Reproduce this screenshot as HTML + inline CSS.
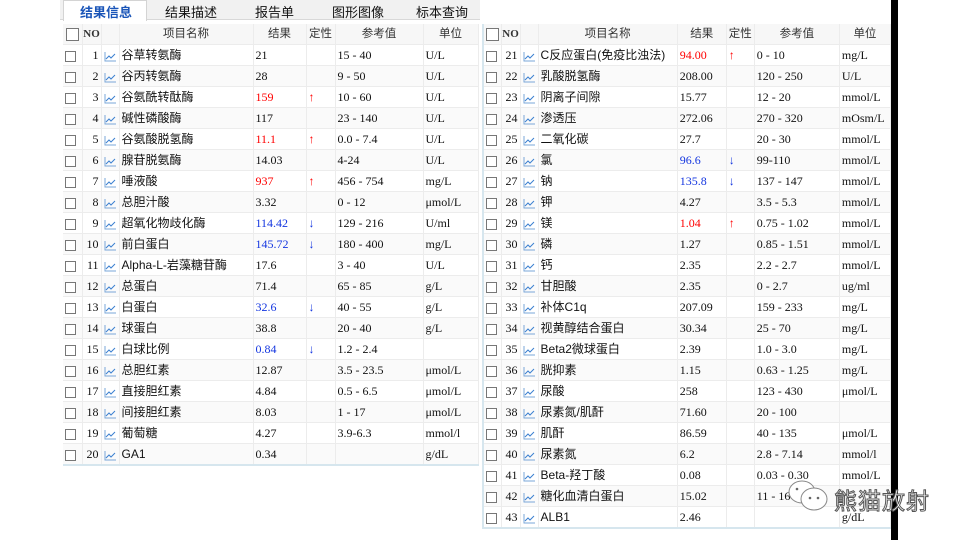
<!DOCTYPE html>
<html><head><meta charset="utf-8"><style>
*{margin:0;padding:0;box-sizing:border-box}
body{width:960px;height:540px;background:#fff;position:relative;overflow:hidden;font-family:"Liberation Serif","Noto Sans CJK SC",serif;font-size:12px;color:#111}
.tabs{position:absolute;left:60px;top:0;width:420px;height:20px;background:#f1f1f1;border-bottom:1px solid #d8d8d8}
.tab{position:absolute;top:2px;font-family:"Liberation Sans","Noto Sans CJK SC",sans-serif;font-size:13px}
.tab.act{left:3px;top:0;width:84px;height:21px;background:#fff;border:1px solid #d4d4d4;border-bottom:none;color:#1a55b8;font-weight:bold;padding-left:16px;padding-top:1px}
table{position:absolute;border-collapse:collapse;table-layout:fixed}
td{height:20.9px;border-right:1px solid #ececec;border-bottom:1px solid #ececec;white-space:nowrap;overflow:hidden;padding:0 2px;line-height:20px}
tr.h td{background:#f7f7f7;text-align:center;font-family:"Liberation Sans","Noto Sans CJK SC",sans-serif;color:#333;font-size:11.5px}
tr.h td.no{font-family:"Liberation Serif",serif;font-weight:bold;font-size:11px;padding:0}
tr:nth-child(odd):not(.h) td{background:#fafafa}
.cb{display:inline-block;width:11px;height:11px;border:1px solid #777;background:#fff;vertical-align:middle}
tr.h .cb{width:13px;height:13px}
td.n{text-align:right}
td.nm{font-family:"Liberation Sans","Noto Sans CJK SC",sans-serif}
.r{color:#f00}.b{color:#1436e0}
.ic{display:inline-block;width:12px;height:10px;vertical-align:middle}
#L{left:63px;top:24px;width:415px;border-bottom:2px solid #d6e6ee}
#R{left:482px;top:24px;width:409px;border-left:2px solid #d6e6ee;border-bottom:2px solid #d6e6ee}
.bar{position:absolute;left:891px;top:0;width:7px;height:540px;background:#000}
.wm{position:absolute;left:834px;top:482px;font-family:"Noto Sans CJK SC",sans-serif;font-size:23px;color:#fff;-webkit-text-stroke:1px #555;letter-spacing:1px}
</style></head><body>
<div class="tabs">
<div class="tab act">结果信息</div>
<div class="tab" style="left:105px">结果描述</div>
<div class="tab" style="left:195px">报告单</div>
<div class="tab" style="left:272px">图形图像</div>
<div class="tab" style="left:356px">标本查询</div>
</div>
<svg width="0" height="0" style="position:absolute"><defs><symbol id="i" viewBox="0 0 12 10"><path d="M1 0V9H12" stroke="#7aa7d8" fill="none"/><path d="M2 7L5 4L7 6L11 2" stroke="#3a7fd0" fill="none"/></symbol></defs></svg>
<table id="L">
<colgroup><col style="width:19px"><col style="width:19px"><col style="width:18px"><col style="width:134px"><col style="width:53px"><col style="width:29px"><col style="width:88px"><col style="width:55px"></colgroup>
<tr class="h"><td><span class="cb"></span></td><td class="no">NO</td><td></td><td>项目名称</td><td>结果</td><td>定性</td><td>参考值</td><td>单位</td></tr>
<tr><td><span class="cb"></span></td><td class="n">1</td><td><svg class="ic"><use href="#i"/></svg></td><td class="nm">谷草转氨酶</td><td>21</td><td></td><td>15 - 40</td><td>U/L</td></tr>
<tr><td><span class="cb"></span></td><td class="n">2</td><td><svg class="ic"><use href="#i"/></svg></td><td class="nm">谷丙转氨酶</td><td>28</td><td></td><td>9 - 50</td><td>U/L</td></tr>
<tr><td><span class="cb"></span></td><td class="n">3</td><td><svg class="ic"><use href="#i"/></svg></td><td class="nm">谷氨酰转酞酶</td><td class="r">159</td><td class="r">↑</td><td>10 - 60</td><td>U/L</td></tr>
<tr><td><span class="cb"></span></td><td class="n">4</td><td><svg class="ic"><use href="#i"/></svg></td><td class="nm">碱性磷酸酶</td><td>117</td><td></td><td>23 - 140</td><td>U/L</td></tr>
<tr><td><span class="cb"></span></td><td class="n">5</td><td><svg class="ic"><use href="#i"/></svg></td><td class="nm">谷氨酸脱氢酶</td><td class="r">11.1</td><td class="r">↑</td><td>0.0 - 7.4</td><td>U/L</td></tr>
<tr><td><span class="cb"></span></td><td class="n">6</td><td><svg class="ic"><use href="#i"/></svg></td><td class="nm">腺苷脱氨酶</td><td>14.03</td><td></td><td>4-24</td><td>U/L</td></tr>
<tr><td><span class="cb"></span></td><td class="n">7</td><td><svg class="ic"><use href="#i"/></svg></td><td class="nm">唾液酸</td><td class="r">937</td><td class="r">↑</td><td>456 - 754</td><td>mg/L</td></tr>
<tr><td><span class="cb"></span></td><td class="n">8</td><td><svg class="ic"><use href="#i"/></svg></td><td class="nm">总胆汁酸</td><td>3.32</td><td></td><td>0 - 12</td><td>μmol/L</td></tr>
<tr><td><span class="cb"></span></td><td class="n">9</td><td><svg class="ic"><use href="#i"/></svg></td><td class="nm">超氧化物歧化酶</td><td class="b">114.42</td><td class="b">↓</td><td>129 - 216</td><td>U/ml</td></tr>
<tr><td><span class="cb"></span></td><td class="n">10</td><td><svg class="ic"><use href="#i"/></svg></td><td class="nm">前白蛋白</td><td class="b">145.72</td><td class="b">↓</td><td>180 - 400</td><td>mg/L</td></tr>
<tr><td><span class="cb"></span></td><td class="n">11</td><td><svg class="ic"><use href="#i"/></svg></td><td class="nm">Alpha-L-岩藻糖苷酶</td><td>17.6</td><td></td><td>3 - 40</td><td>U/L</td></tr>
<tr><td><span class="cb"></span></td><td class="n">12</td><td><svg class="ic"><use href="#i"/></svg></td><td class="nm">总蛋白</td><td>71.4</td><td></td><td>65 - 85</td><td>g/L</td></tr>
<tr><td><span class="cb"></span></td><td class="n">13</td><td><svg class="ic"><use href="#i"/></svg></td><td class="nm">白蛋白</td><td class="b">32.6</td><td class="b">↓</td><td>40 - 55</td><td>g/L</td></tr>
<tr><td><span class="cb"></span></td><td class="n">14</td><td><svg class="ic"><use href="#i"/></svg></td><td class="nm">球蛋白</td><td>38.8</td><td></td><td>20 - 40</td><td>g/L</td></tr>
<tr><td><span class="cb"></span></td><td class="n">15</td><td><svg class="ic"><use href="#i"/></svg></td><td class="nm">白球比例</td><td class="b">0.84</td><td class="b">↓</td><td>1.2 - 2.4</td><td></td></tr>
<tr><td><span class="cb"></span></td><td class="n">16</td><td><svg class="ic"><use href="#i"/></svg></td><td class="nm">总胆红素</td><td>12.87</td><td></td><td>3.5 - 23.5</td><td>μmol/L</td></tr>
<tr><td><span class="cb"></span></td><td class="n">17</td><td><svg class="ic"><use href="#i"/></svg></td><td class="nm">直接胆红素</td><td>4.84</td><td></td><td>0.5 - 6.5</td><td>μmol/L</td></tr>
<tr><td><span class="cb"></span></td><td class="n">18</td><td><svg class="ic"><use href="#i"/></svg></td><td class="nm">间接胆红素</td><td>8.03</td><td></td><td>1 - 17</td><td>μmol/L</td></tr>
<tr><td><span class="cb"></span></td><td class="n">19</td><td><svg class="ic"><use href="#i"/></svg></td><td class="nm">葡萄糖</td><td>4.27</td><td></td><td>3.9-6.3</td><td>mmol/l</td></tr>
<tr><td><span class="cb"></span></td><td class="n">20</td><td><svg class="ic"><use href="#i"/></svg></td><td class="nm">GA1</td><td>0.34</td><td></td><td></td><td>g/dL</td></tr>
</table>
<table id="R">
<colgroup><col style="width:18px"><col style="width:19px"><col style="width:18px"><col style="width:139px"><col style="width:49px"><col style="width:28px"><col style="width:85px"><col style="width:51px"></colgroup>
<tr class="h"><td><span class="cb"></span></td><td class="no">NO</td><td></td><td>项目名称</td><td>结果</td><td>定性</td><td>参考值</td><td>单位</td></tr>
<tr><td><span class="cb"></span></td><td class="n">21</td><td><svg class="ic"><use href="#i"/></svg></td><td class="nm">C反应蛋白(免疫比浊法)</td><td class="r">94.00</td><td class="r">↑</td><td>0 - 10</td><td>mg/L</td></tr>
<tr><td><span class="cb"></span></td><td class="n">22</td><td><svg class="ic"><use href="#i"/></svg></td><td class="nm">乳酸脱氢酶</td><td>208.00</td><td></td><td>120 - 250</td><td>U/L</td></tr>
<tr><td><span class="cb"></span></td><td class="n">23</td><td><svg class="ic"><use href="#i"/></svg></td><td class="nm">阴离子间隙</td><td>15.77</td><td></td><td>12 - 20</td><td>mmol/L</td></tr>
<tr><td><span class="cb"></span></td><td class="n">24</td><td><svg class="ic"><use href="#i"/></svg></td><td class="nm">渗透压</td><td>272.06</td><td></td><td>270 - 320</td><td>mOsm/L</td></tr>
<tr><td><span class="cb"></span></td><td class="n">25</td><td><svg class="ic"><use href="#i"/></svg></td><td class="nm">二氧化碳</td><td>27.7</td><td></td><td>20 - 30</td><td>mmol/L</td></tr>
<tr><td><span class="cb"></span></td><td class="n">26</td><td><svg class="ic"><use href="#i"/></svg></td><td class="nm">氯</td><td class="b">96.6</td><td class="b">↓</td><td>99-110</td><td>mmol/L</td></tr>
<tr><td><span class="cb"></span></td><td class="n">27</td><td><svg class="ic"><use href="#i"/></svg></td><td class="nm">钠</td><td class="b">135.8</td><td class="b">↓</td><td>137 - 147</td><td>mmol/L</td></tr>
<tr><td><span class="cb"></span></td><td class="n">28</td><td><svg class="ic"><use href="#i"/></svg></td><td class="nm">钾</td><td>4.27</td><td></td><td>3.5 - 5.3</td><td>mmol/L</td></tr>
<tr><td><span class="cb"></span></td><td class="n">29</td><td><svg class="ic"><use href="#i"/></svg></td><td class="nm">镁</td><td class="r">1.04</td><td class="r">↑</td><td>0.75 - 1.02</td><td>mmol/L</td></tr>
<tr><td><span class="cb"></span></td><td class="n">30</td><td><svg class="ic"><use href="#i"/></svg></td><td class="nm">磷</td><td>1.27</td><td></td><td>0.85 - 1.51</td><td>mmol/L</td></tr>
<tr><td><span class="cb"></span></td><td class="n">31</td><td><svg class="ic"><use href="#i"/></svg></td><td class="nm">钙</td><td>2.35</td><td></td><td>2.2 - 2.7</td><td>mmol/L</td></tr>
<tr><td><span class="cb"></span></td><td class="n">32</td><td><svg class="ic"><use href="#i"/></svg></td><td class="nm">甘胆酸</td><td>2.35</td><td></td><td>0 - 2.7</td><td>ug/ml</td></tr>
<tr><td><span class="cb"></span></td><td class="n">33</td><td><svg class="ic"><use href="#i"/></svg></td><td class="nm">补体C1q</td><td>207.09</td><td></td><td>159 - 233</td><td>mg/L</td></tr>
<tr><td><span class="cb"></span></td><td class="n">34</td><td><svg class="ic"><use href="#i"/></svg></td><td class="nm">视黄醇结合蛋白</td><td>30.34</td><td></td><td>25 - 70</td><td>mg/L</td></tr>
<tr><td><span class="cb"></span></td><td class="n">35</td><td><svg class="ic"><use href="#i"/></svg></td><td class="nm">Beta2微球蛋白</td><td>2.39</td><td></td><td>1.0 - 3.0</td><td>mg/L</td></tr>
<tr><td><span class="cb"></span></td><td class="n">36</td><td><svg class="ic"><use href="#i"/></svg></td><td class="nm">胱抑素</td><td>1.15</td><td></td><td>0.63 - 1.25</td><td>mg/L</td></tr>
<tr><td><span class="cb"></span></td><td class="n">37</td><td><svg class="ic"><use href="#i"/></svg></td><td class="nm">尿酸</td><td>258</td><td></td><td>123 - 430</td><td>μmol/L</td></tr>
<tr><td><span class="cb"></span></td><td class="n">38</td><td><svg class="ic"><use href="#i"/></svg></td><td class="nm">尿素氮/肌酐</td><td>71.60</td><td></td><td>20 - 100</td><td></td></tr>
<tr><td><span class="cb"></span></td><td class="n">39</td><td><svg class="ic"><use href="#i"/></svg></td><td class="nm">肌酐</td><td>86.59</td><td></td><td>40 - 135</td><td>μmol/L</td></tr>
<tr><td><span class="cb"></span></td><td class="n">40</td><td><svg class="ic"><use href="#i"/></svg></td><td class="nm">尿素氮</td><td>6.2</td><td></td><td>2.8 - 7.14</td><td>mmol/l</td></tr>
<tr><td><span class="cb"></span></td><td class="n">41</td><td><svg class="ic"><use href="#i"/></svg></td><td class="nm">Beta-羟丁酸</td><td>0.08</td><td></td><td>0.03 - 0.30</td><td>mmol/L</td></tr>
<tr><td><span class="cb"></span></td><td class="n">42</td><td><svg class="ic"><use href="#i"/></svg></td><td class="nm">糖化血清白蛋白</td><td>15.02</td><td></td><td>11 - 16</td><td></td></tr>
<tr><td><span class="cb"></span></td><td class="n">43</td><td><svg class="ic"><use href="#i"/></svg></td><td class="nm">ALB1</td><td>2.46</td><td></td><td></td><td>g/dL</td></tr>
</table>
<div class="bar"></div>
<svg style="position:absolute;left:786px;top:478px" width="46" height="36" viewBox="0 0 46 36"><ellipse cx="16" cy="14" rx="13" ry="11" fill="#fff" stroke="#888"/><ellipse cx="28" cy="21" rx="13" ry="11" fill="#fff" stroke="#888"/><circle cx="24" cy="20" r="1.3" fill="#666"/><circle cx="32" cy="20" r="1.3" fill="#666"/><circle cx="11" cy="11" r="1.3" fill="#666"/></svg>
<div class="wm">熊猫放射</div>
</body></html>
